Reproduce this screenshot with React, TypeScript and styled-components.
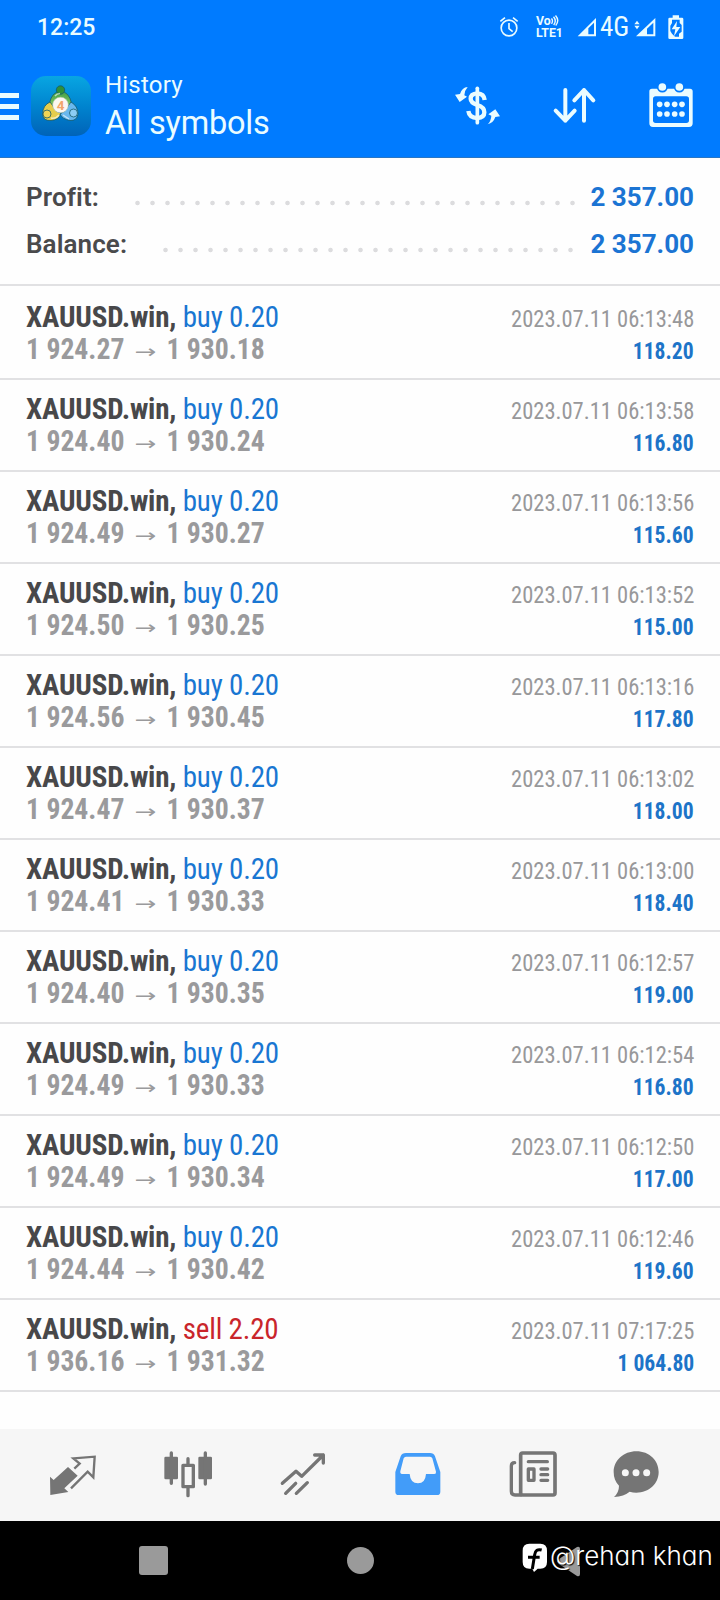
import React from 'react';
import styled, { createGlobalStyle } from 'styled-components';

const GlobalStyle = createGlobalStyle`
  * { box-sizing: border-box; }
  body { margin: 0; background: #fff; font-family: Roboto, "Liberation Sans", sans-serif; }
  svg { display: block; flex: none; }
`;

const Screen = styled.div`
  width: 720px;
  height: 1600px;
  display: flex;
  flex-direction: column;
  overflow: hidden;
  background: #fefefe;
`;

const Header = styled.header`
  height: 158px;
  flex: none;
  background: #007bff;
  border-bottom: 1px solid #2a76c4;
  color: #eafcff;
`;

const StatusBar = styled.div`
  height: 54px;
  display: flex;
  align-items: center;
  padding-right: 36px;
`;

const Clock = styled.span`
  margin-left: 37px;
  margin-right: auto;
  font-size: 23px;
  font-weight: 500;
  line-height: 27px;
`;

const Volte = styled.div`
  width: 27px;
  margin: 0 14px 0 17px;
  font-size: 12.3px;
  line-height: 12px;
  font-weight: 700;
  white-space: nowrap;
`;

const VolteTop = styled.div`
  display: flex;
  gap: 0;
`;

const Network = styled.span`
  width: 28px;
  margin: 0 6px 0 3px;
  font-family: "Roboto Condensed", Roboto, sans-serif;
  font-size: 27px;
  font-weight: 450;
  letter-spacing: -0.1px;
  line-height: 30px;
`;

const BatterySlot = styled.div`
  margin-left: 12px;
`;

const Toolbar = styled.div`
  height: 103px;
  display: flex;
  align-items: flex-start;
  padding: 22px 25px 0 0;
`;

const MenuButton = styled.div`
  width: 19px;
  height: 27px;
  margin: 17px 11.500px 0 0;
  display: flex;
  flex-direction: column;
  justify-content: space-between;
`;

const MenuBar = styled.span`
  height: 4.6px;
  background: #eafcff;
`;

const Titles = styled.div`
  margin: -5px auto 0 14.500px;
  display: flex;
  flex-direction: column;
`;

const Subtitle = styled.span`
  font-size: 24px;
  line-height: 28px;
  letter-spacing: 0.2px;
`;

const Title = styled.span`
  margin-top: 5px;
  font-size: 32.5px;
  line-height: 38px;
  letter-spacing: -0.25px;
`;

const Tools = styled.div`
  display: flex;
  padding-top: 5px;
`;

const SortSlot = styled.div`
  margin: 0 49px 0 47.600px;
`;

const Summary = styled.section`
  height: 128px;
  flex: none;
  padding: 15px 26px 0;
  border-bottom: 2px solid #e1e1e3;
`;

const SummaryRow = styled.div`
  height: 47px;
  display: flex;
  align-items: center;
  font-size: 26px;
  font-weight: 700;
`;

const SummaryLabel = styled.span`
  color: #4a4a4c;
  font-weight: 600;
  letter-spacing: 0.1px;
`;

const Dots = styled.span<{ $width: number; $end: number }>`
  width: ${p => p.$width}px;
  height: 6px;
  margin: 12px ${p => p.$end}px 0 auto;
  background: radial-gradient(circle at center, #dcdcde 1.8px, transparent 2.7px) 0 0 / 15px 6px repeat-x;
`;

const SummaryValue = styled.span`
  width: 105px;
  text-align: right;
  color: #1b74d3;
  white-space: nowrap;
`;

const List = styled.main`
  flex: 1;
  padding-top: 2px;
`;

const Deal = styled.article`
  height: 92px;
  display: flex;
  justify-content: space-between;
  padding: 12px 26px 0;
  border-bottom: 2px solid #e1e1e3;
  font-family: "Roboto Condensed", Roboto, sans-serif;
  white-space: nowrap;
`;

const Left = styled.div`
  display: flex;
  flex-direction: column;
`;

const Right = styled.div`
  display: flex;
  flex-direction: column;
  align-items: flex-end;
`;

const SymbolLine = styled.div`
  font-size: 29px;
  line-height: 34px;
  font-weight: 700;
  letter-spacing: -0.18px;
  color: #48484a;
`;

const Side = styled.span<{ $sell?: boolean }>`
  font-weight: 400;
  color: ${p => (p.$sell ? '#c9252b' : '#1976d2')};
`;

const PriceLine = styled.div`
  display: flex;
  margin-top: -2px;
  font-size: 29px;
  line-height: 34px;
  font-weight: 700;
  color: #9a9a9c;
  transform: scaleX(0.955);
  transform-origin: left;
`;

const Arrow = styled.span`
  width: 44px;
  height: 34px;
  text-align: center;
  font-family: "DejaVu Sans", sans-serif;
  font-size: 21px;
  font-weight: 400;
  line-height: 40px;
  transform: scale(1.3, 0.9);
`;

const Time = styled.span`
  margin-top: 5px;
  font-size: 24px;
  line-height: 28px;
  color: #98989a;
  transform: scaleX(0.938);
  transform-origin: right;
`;

const Result = styled.span`
  margin-top: 4px;
  font-size: 24px;
  line-height: 28px;
  font-weight: 700;
  color: #1d74c8;
  transform: scaleX(0.9);
  transform-origin: right;
`;

const TabBar = styled.nav`
  height: 92px;
  flex: none;
  display: flex;
  gap: 67px;
  padding: 22px 0 0 48.670px;
  background: #f6f6f6;
`;

const ChatTab = styled.span`
  margin-left: -12px;
`;

const SystemBar = styled.footer`
  position: relative;
  height: 79px;
  flex: none;
  display: flex;
  align-items: flex-start;
  padding: 25px 0 0 139px;
  background: #000;
`;

const RecentsKey = styled.span`
  width: 29px;
  height: 29px;
  border-radius: 3px;
  background: #9a9a9a;
`;

const HomeKey = styled.span`
  width: 27px;
  height: 27px;
  margin: 1px 183px 0 179px;
  border-radius: 50%;
  background: #9a9a9a;
`;

const Watermark = styled.div`
  position: absolute;
  top: 22px;
  left: 522px;
  display: flex;
  color: #fff;
`;

const Handle = styled.span`
  margin: -1px 0 0 2px;
  font-family: Inter, sans-serif;
  font-feature-settings: "cv11";
  font-size: 26px;
  font-weight: 350;
  line-height: 28px;
  white-space: nowrap;
  text-shadow: 1px 1px 1px #000;
`;

const ink = '#eafcff';

const AlarmIcon = () => (
  <svg width="20" height="22" viewBox="177 46 60 66" fill="none" stroke={ink} strokeWidth="5">
    <circle cx="207" cy="82" r="23.5" />
    <path d="M207 67v17l11 9M181 62l14-11M233 62l-14-11" />
  </svg>
);

const WaveIcon = () => (
  <svg width="8" height="11" viewBox="0 0 8 11" fill="none" stroke={ink} strokeWidth="1.4">
    <path d="M.5 3.400q2 2.600 0 5.500M2.500 1.800q3.400 4 .2 8.200M4.500 .5q4.400 5 .2 10" />
  </svg>
);

const SignalIcon = () => (
  <svg width="20" height="20" viewBox="411 50 60 60" fill={ink}>
    <path fillRule="evenodd" d="M468 53V108H413ZM462 67L445 84V102H462Z" />
  </svg>
);

const DataSignalIcon = () => (
  <svg width="22" height="20" viewBox="582 50 66 60" fill={ink}>
    <path fillRule="evenodd" d="M646 53V108H588ZM640 67L621 85V102H640Z" />
    <path d="M583 72L591 61L599 72ZM583 76L591 87L599 76Z" />
  </svg>
);

const BatteryIcon = () => (
  <svg width="16" height="25" viewBox="683 42 48 75">
    <path fill={ink} d="M697 43h19v7h9q4 0 4 4v56q0 4-4 4h-37q-4 0-4-4V54q0-4 4-4h9z" />
    <path fill="#007bff" d="M695 56H718V66L724 72V92L716 98V107H704L695 98L690 90V74L695 66Z" />
    <path fill={ink} d="M710 60L694 85h11l-4 21 19-28h-12z" />
  </svg>
);

const AppLogo = () => (
  <svg width="60" height="60" viewBox="0 0 60 60">
    <defs>
      <linearGradient id="tile" x1="0" y1="0" x2="0" y2="1">
        <stop offset="0" stopColor="#08a6e2" />
        <stop offset=".5" stopColor="#0084cf" />
        <stop offset="1" stopColor="#0063b8" />
      </linearGradient>
      <linearGradient id="leaf" x1="0" y1="0" x2="0" y2="1">
        <stop offset="0" stopColor="#3f9c42" />
        <stop offset="1" stopColor="#8ed06c" />
      </linearGradient>
    </defs>
    <rect width="60" height="60" rx="15" fill="url(#tile)" />
    <g stroke="#155a6b" strokeWidth=".8">
      <path fill="url(#leaf)" d="M29.500 15Q38 16 40.500 27Q36 33 29.500 32Q23 33 18.500 27Q21 16 29.500 15Z" />
      <path fill="#e6cd4c" d="M19 26Q12 29 11.500 38Q12 45 20 44.500Q28 44 30 37Q24 36 22 30Z" />
      <path fill="#69b8ee" d="M40 26Q47 30 47 38Q46 45 39 44.500Q31 43 29 38Q36 35 37 30Z" />
      <circle cx="29.500" cy="14" r="4.200" fill="#2f9038" />
      <circle cx="16" cy="38" r="4" fill="#f0d455" />
      <circle cx="42.500" cy="37" r="4" fill="#8ccdf4" />
    </g>
    <path d="M20 42q5 1 8-3M32 39l6 4M24 20q2-2.500 5-2.500" stroke="#fff" strokeOpacity=".6" strokeWidth="1.500" fill="none" />
    <circle cx="29.500" cy="29" r="7.800" fill="#fbf7f2" stroke="#b9c8b0" strokeWidth=".5" />
    <text x="29.500" y="33.800" textAnchor="middle" fontFamily="Roboto, sans-serif" fontSize="13.500" fontWeight="700" fill="#f2a56b">4</text>
  </svg>
);

const CurrencyIcon = () => (
  <svg width="48" height="48" viewBox="42 243 144 144" fill="none" stroke={ink}>
    <path strokeWidth="11" strokeLinecap="round" d="M112 265V368" />
    <path strokeWidth="13" d="M134 300Q132 281 112 280Q92 281 92 296Q92 308 112 315Q133 321 133 337Q133 353 112 354Q88 354 85 333" />
    <path fill={ink} stroke="none" d="M83 261Q66 262 60 282L45 284L59 306L81 290L73 286Q74 271 83 261ZM143 373Q160 369 166 351L180 349L166 328L145 343L154 347Q153 363 143 373Z" />
  </svg>
);

const SortIcon = () => (
  <svg width="48" height="48" viewBox="330 243 144 144" fill="none" stroke={ink} strokeWidth="12" strokeLinecap="round" strokeLinejoin="round">
    <path d="M376 270V362M347 332L376 362L404 332M432 362V270M403 301L432 270L460 301" />
  </svg>
);

const CalendarIcon = () => (
  <svg width="48" height="48" viewBox="620 243 144 144" fill={ink}>
    <path fillRule="evenodd" d="M635 266H749Q757 266 757 274V370Q757 381 746 381H638Q627 381 627 370V274Q627 266 635 266ZM646 289Q638 289 638 297V361Q638 369 646 369H738Q746 369 746 361V297Q746 289 738 289Z" />
    <g stroke="#007bff" strokeWidth="5">
      <circle cx="666" cy="261" r="14" />
      <circle cx="717" cy="261" r="14" />
    </g>
    {[658, 680, 703, 725].map(x => (
      <g key={x}>
        <circle cx={x} cy="313" r="8.500" />
        <circle cx={x} cy="342" r="8.500" />
      </g>
    ))}
  </svg>
);

const QuotesIcon = () => (
  <svg width="48" height="48" viewBox="146 93 144 144">
    <path fill="#757575" d="M149 170L160 180L203 141L232 167L192 205L204 216L150 225Z" />
    <path fill="none" stroke="#757575" strokeWidth="7" d="M222 146L238 131L219 115L283 110L279 172L262 155L212 205" />
  </svg>
);

const ChartIcon = () => (
  <svg width="48" height="48" viewBox="490 93 144 144" fill="#757575">
    <rect x="491" y="110" width="41" height="68" rx="4" />
    <rect x="593" y="110" width="41" height="68" rx="4" />
    <path fill="none" stroke="#757575" strokeWidth="10" strokeLinecap="round" d="M512 99V190M614 99V192M562 116V132M562 204V227" />
    <rect x="547" y="136" width="31" height="64" fill="#f6f6f6" stroke="#757575" strokeWidth="10" strokeLinejoin="round" />
  </svg>
);

const TradeIcon = () => (
  <svg width="48" height="48" viewBox="835 93 144 144" fill="none" stroke="#757575" strokeWidth="10" strokeLinecap="round" strokeLinejoin="round">
    <path d="M845 190L886 154L903 169L968 105M942 105H968V129M855 220L885 190M887 220L920 188" />
  </svg>
);

const HistoryIcon = () => (
  <svg width="48" height="48" viewBox="101 93 144 144">
    <path fill="#429cf9" fillRule="evenodd" d="M137 99H209Q220 99 224 109L240 156V215Q240 225 230 225H115Q105 225 105 215V156L121 109Q125 99 137 99ZM137 110Q132 110 130 115L120 154Q119 162 125 162H148Q150 190 173 190Q195 190 197 162H222Q228 162 227 155L216 115Q214 110 209 110Z" />
  </svg>
);

const NewsIcon = () => (
  <svg width="48" height="48" viewBox="447 93 144 144" fill="none" stroke="#757575">
    <path strokeWidth="10" strokeLinecap="round" d="M464 128Q454 128 454 138V214Q454 225 465 225H483" />
    <rect x="482" y="99" width="103" height="126" rx="6" strokeWidth="11" />
    <path strokeWidth="10" strokeLinecap="round" d="M505 125H562M543 147H563M543 164H563M543 181H563" />
    <rect x="505" y="147" width="17" height="34" strokeWidth="10" strokeLinejoin="round" />
  </svg>
);

const ChatIcon = () => (
  <svg width="48" height="48" viewBox="756 93 144 144">
    <path fill="#757575" d="M829 94C868 94 896 121 896 156S867 218 829 218Q819 218 809 215Q792 229 762 231Q777 217 777 197C766 187 761 172 761 156C761 121 791 94 829 94Z" />
    <g fill="#f6f6f6">
      <circle cx="796" cy="158" r="10.500" />
      <circle cx="828" cy="158" r="10.500" />
      <circle cx="860" cy="158" r="10.500" />
    </g>
  </svg>
);

const BackKey = () => (
  <svg width="24" height="31" viewBox="0 0 24 31">
    <path fill="#9a9a9a" d="M20 1Q23 0 23 3V28Q23 31 20 30L2 18Q-1 15.500 2 13Z" />
  </svg>
);

const FacebookIcon = () => (
  <svg width="26" height="30" viewBox="486 370 78 90">
    <path fill="#fff" d="M508 372H541Q561 372 561 393V427Q561 447 541 447H533L522 457L517 447H508Q488 447 488 427V393Q488 372 508 372Z" />
    <path fill="none" stroke="#000" strokeWidth="9" d="M545 391Q527 386 524 405L517 448M504 413H539" />
  </svg>
);

type DealData = { open: string; close: string; time: string; result: string; sell?: boolean };

const deals: DealData[] = [
  { open: '1 924.27', close: '1 930.18', time: '06:13:48', result: '118.20' },
  { open: '1 924.40', close: '1 930.24', time: '06:13:58', result: '116.80' },
  { open: '1 924.49', close: '1 930.27', time: '06:13:56', result: '115.60' },
  { open: '1 924.50', close: '1 930.25', time: '06:13:52', result: '115.00' },
  { open: '1 924.56', close: '1 930.45', time: '06:13:16', result: '117.80' },
  { open: '1 924.47', close: '1 930.37', time: '06:13:02', result: '118.00' },
  { open: '1 924.41', close: '1 930.33', time: '06:13:00', result: '118.40' },
  { open: '1 924.40', close: '1 930.35', time: '06:12:57', result: '119.00' },
  { open: '1 924.49', close: '1 930.33', time: '06:12:54', result: '116.80' },
  { open: '1 924.49', close: '1 930.34', time: '06:12:50', result: '117.00' },
  { open: '1 924.44', close: '1 930.42', time: '06:12:46', result: '119.60' },
  { open: '1 936.16', close: '1 931.32', time: '07:17:25', result: '1 064.80', sell: true },
];

export default function App() {
  return (
    <Screen>
      <GlobalStyle />
      <Header>
        <StatusBar>
          <Clock>12:25</Clock>
          <AlarmIcon />
          <Volte>
            <VolteTop>Vo<WaveIcon /></VolteTop>
            <div>LTE1</div>
          </Volte>
          <SignalIcon />
          <Network>4G</Network>
          <DataSignalIcon />
          <BatterySlot><BatteryIcon /></BatterySlot>
        </StatusBar>
        <Toolbar>
          <MenuButton><MenuBar /><MenuBar /><MenuBar /></MenuButton>
          <AppLogo />
          <Titles>
            <Subtitle>History</Subtitle>
            <Title>All symbols</Title>
          </Titles>
          <Tools>
            <CurrencyIcon />
            <SortSlot><SortIcon /></SortSlot>
            <CalendarIcon />
          </Tools>
        </Toolbar>
      </Header>
      <Summary>
        <SummaryRow>
          <SummaryLabel>Profit:</SummaryLabel>
          <Dots $width={450} $end={9} />
          <SummaryValue>2 357.00</SummaryValue>
        </SummaryRow>
        <SummaryRow>
          <SummaryLabel>Balance:</SummaryLabel>
          <Dots $width={420} $end={11} />
          <SummaryValue>2 357.00</SummaryValue>
        </SummaryRow>
      </Summary>
      <List>
        {deals.map(d => (
          <Deal key={d.time}>
            <Left>
              <SymbolLine>XAUUSD.win, <Side $sell={d.sell}>{d.sell ? 'sell 2.20' : 'buy 0.20'}</Side></SymbolLine>
              <PriceLine>{d.open}<Arrow>→</Arrow>{d.close}</PriceLine>
            </Left>
            <Right>
              <Time>2023.07.11 {d.time}</Time>
              <Result>{d.result}</Result>
            </Right>
          </Deal>
        ))}
      </List>
      <TabBar>
        <QuotesIcon />
        <ChartIcon />
        <TradeIcon />
        <HistoryIcon />
        <NewsIcon />
        <ChatTab><ChatIcon /></ChatTab>
      </TabBar>
      <SystemBar>
        <RecentsKey />
        <HomeKey />
        <BackKey />
        <Watermark>
          <FacebookIcon />
          <Handle>@rehan khan</Handle>
        </Watermark>
      </SystemBar>
    </Screen>
  );
}
